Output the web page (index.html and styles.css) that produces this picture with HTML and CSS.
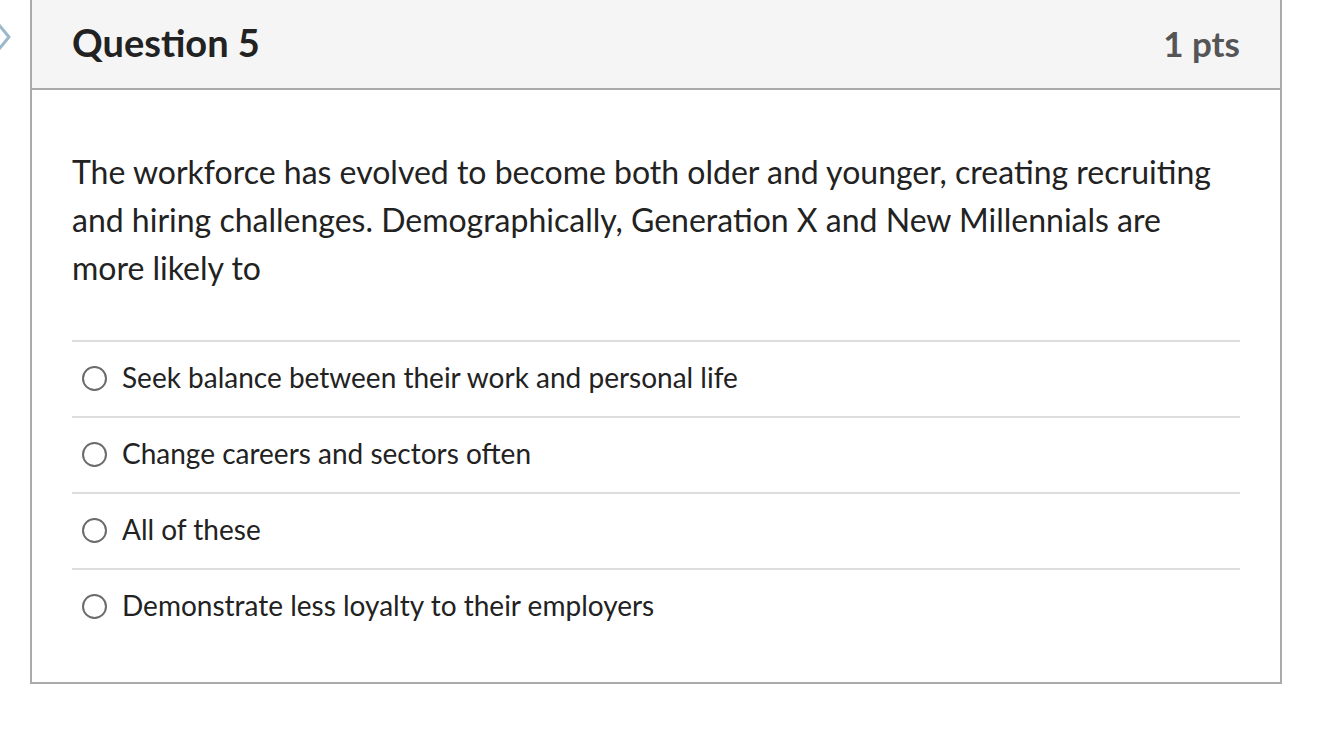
FILE: index.html
```html
<!DOCTYPE html>
<html lang="en">
<head>
<meta charset="utf-8">
<title>Question 5</title>
<link rel="stylesheet" href="styles.css">
</head>
<body>
<div class="page">
  <svg class="nav-arrow" width="14" height="30" viewBox="0 0 14 30" aria-hidden="true">
    <polyline points="1,2 11,14 1,26" fill="none" stroke="#9db8cb" stroke-width="3" stroke-linecap="round" stroke-linejoin="round"/>
  </svg>
  <div class="question">
    <div class="q-header">
      <h2 class="q-title">Question 5</h2>
      <span class="q-points">1 pts</span>
    </div>
    <div class="q-body">
      <p class="q-text">The workforce has evolved to become both older and younger, creating recruiting and hiring challenges. Demographically, Generation X and New Millennials are more likely to</p>
      <ul class="answers">
        <li class="answer"><span class="radio"></span><span class="label">Seek balance between their work and personal life</span></li>
        <li class="answer"><span class="radio"></span><span class="label">Change careers and sectors often</span></li>
        <li class="answer"><span class="radio"></span><span class="label">All of these</span></li>
        <li class="answer"><span class="radio"></span><span class="label">Demonstrate less loyalty to their employers</span></li>
      </ul>
    </div>
  </div>
</div>
</body>
</html>
```

FILE: styles.css
```css
html, body {
  margin: 0;
  padding: 0;
  background: #ffffff;
}

body {
  font-family: Lato, "Noto Sans", sans-serif;
  color: #222;
}

.page {
  position: relative;
  padding-left: 30px;
  width: 1252px;
}

.nav-arrow {
  position: absolute;
  left: -2px;
  top: 23px;
}

.question {
  border: 2px solid #aaaaaa;
  border-top: none;
}

.q-header {
  height: 88px;
  box-sizing: border-box;
  padding: 0 40px 4px;
  background: #f5f5f5;
  border-bottom: 2px solid #aaaaaa;
  height: 90px;
  display: flex;
  align-items: center;
  justify-content: space-between;
}

.q-title {
  margin: 0;
  font-size: 38px;
  font-weight: 700;
  color: #222;
  line-height: 1;
}

.q-points {
  font-size: 35px;
  font-weight: 700;
  color: #555;
  line-height: 1;
  margin-top: 2px;
}

.q-body {
  padding: 58px 40px 38px;
}

.q-text {
  margin: 0 0 48px;
  font-size: 32px;
  line-height: 48px;
  color: #222;
}

.answers {
  list-style: none;
  margin: 0;
  padding: 0;
}

.answer {
  box-sizing: border-box;
  height: 76px;
  border-top: 2px solid #dddddd;
  padding: 0 0 4px 10px;
  display: flex;
  align-items: center;
  gap: 15px;
}

.radio {
  width: 21px;
  height: 21px;
  border: 2px solid #6b6b6b;
  border-radius: 50%;
  flex: none;
  margin-top: 3px;
}

.label {
  font-size: 28px;
  color: #222;
}
```
